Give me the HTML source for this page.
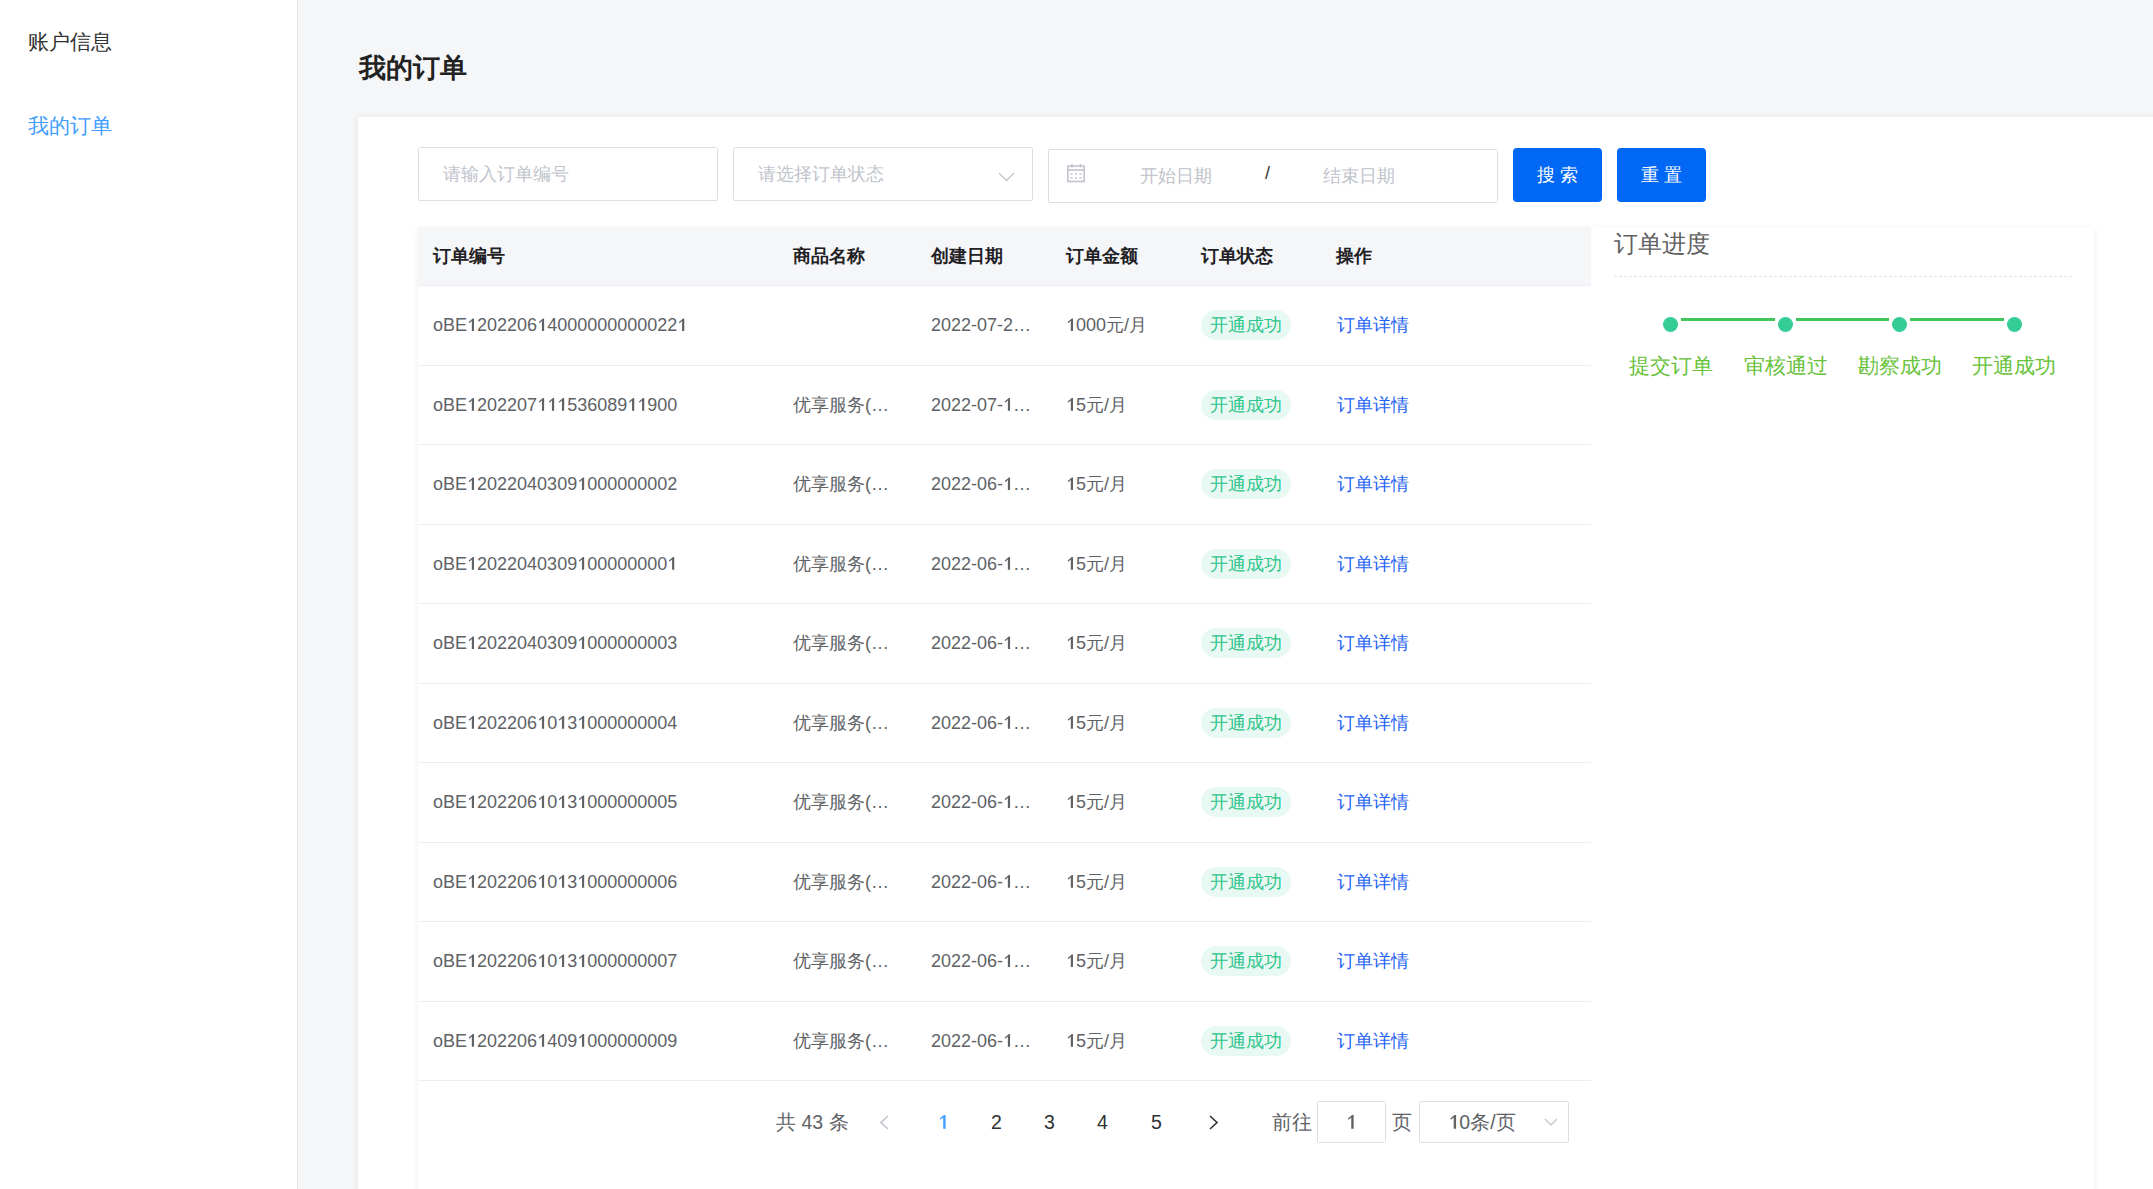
<!DOCTYPE html>
<html><head><meta charset="utf-8">
<style>
*{box-sizing:border-box;margin:0;padding:0}
html,body{width:2153px;height:1189px;overflow:hidden}
body{background:#f5f6f8;font-family:"Liberation Sans",sans-serif;position:relative;color:#606266}
.abs{position:absolute}
.side{left:0;top:0;width:298px;height:1189px;background:#fff;border-right:1px solid #e4e4e4}
.nav{position:absolute;left:28px;font-size:21px;line-height:24px;white-space:nowrap}
.title{left:358.5px;top:50px;font-size:27px;font-weight:bold;color:#222;line-height:36px}
.card{left:358px;top:117px;width:1900px;height:1200px;background:#fff;box-shadow:0 1px 7px rgba(0,0,0,.075)}
.inp{position:absolute;border:1px solid #dcdfe6;border-radius:1.5px;background:#fff;font-size:18px;color:#c0c4cc;line-height:20px;white-space:nowrap}
.ph{position:absolute}
.btn{position:absolute;top:148px;width:89px;height:54px;background:#0068f5;border-radius:4px;color:#fff;font-size:18px;line-height:54px;text-align:center;white-space:pre}
.tbl{left:418px;top:227px;width:1173px;height:1000px;background:#fff;z-index:2;box-shadow:-4px 0 6px -2px rgba(0,0,0,.04),0 -3px 5px -2px rgba(0,0,0,.03)}
.thead{position:absolute;left:0;top:0;width:1173px;height:59px;background:#f5f6f8;border-bottom:1px solid #ebeef5}
.th{position:absolute;top:0;height:58px;line-height:58px;font-size:18px;font-weight:bold;color:#1f2024;white-space:nowrap}
.row{position:absolute;left:0;width:1173px;height:79.5px;border-bottom:1px solid #ebeef5}
.td{position:absolute;top:0;height:79px;line-height:79px;font-size:18px;color:#606266;white-space:nowrap}
.tag{position:absolute;left:783px;top:24px;width:90px;height:30px;border-radius:15px;background:#e8f8f2;color:#2ec68c;font-size:18px;line-height:30px;text-align:center}
.lnk{position:absolute;left:919px;top:0;height:79px;line-height:79px;font-size:18px;color:#1f64f2}
.prog{left:1591px;top:227px;width:503px;height:1000px;background:#fff;box-shadow:4px 0 6px -2px rgba(0,0,0,.05),0 -2px 4px -1px rgba(0,0,0,.025)}
.dot{position:absolute;width:15px;height:15px;border-radius:50%;background:#35cd96}
.pline{position:absolute;height:3px;background:#41c45a}
.plab{position:absolute;font-size:21px;line-height:24px;color:#67c23a;white-space:nowrap}
.pg{position:absolute;font-size:19.5px;line-height:24px;color:#606266;white-space:nowrap}
.d1{position:relative;color:transparent}
.d1::before{content:"";position:absolute;left:0;top:.189em;width:.556em;height:.716em;background:var(--c,#606266);clip-path:polygon(58% 0,70% 0,70% 100%,48% 100%,48% 21%,22% 37%,17% 28%)}
</style></head><body>
<div class="abs side">
  <div class="nav" style="top:29.5px;color:#303133">账户信息</div>
  <div class="nav" style="top:114px;color:#409eff">我的订单</div>
</div>
<div class="abs title">我的订单</div>
<div class="abs card"></div>

<!-- filters -->
<div class="inp" style="left:418px;top:147px;width:300px;height:54px"><span class="ph" style="left:24px;top:16px">请输入订单编号</span></div>
<div class="inp" style="left:733px;top:147px;width:300px;height:54px"><span class="ph" style="left:24px;top:16px">请选择订单状态</span>
  <svg class="ph" style="left:264.3px;top:23.6px" width="17" height="10" viewBox="0 0 17 10"><path d="M1 1 L8.5 8.5 L16 1" fill="none" stroke="#c0c4cc" stroke-width="1.3"/></svg>
</div>
<div class="inp" style="left:1048px;top:149px;width:450px;height:54px">
  <svg class="ph" style="left:18px;top:14px" width="19" height="20" viewBox="0 0 19 20"><g fill="none" stroke="#c0c4cc" stroke-width="1.6"><rect x="0.8" y="2.1" width="16.4" height="15.4"/><line x1="0.8" y1="6" x2="17.2" y2="6"/><line x1="5" y1="0" x2="5" y2="3.5"/><line x1="13.5" y1="0" x2="13.5" y2="3.5"/></g><g fill="#c0c4cc"><rect x="3.5" y="9.2" width="2" height="1.4"/><rect x="8" y="9.2" width="2" height="1.4"/><rect x="12.5" y="9.2" width="2" height="1.4"/><rect x="3.5" y="13.2" width="2" height="1.4"/><rect x="8" y="13.2" width="2" height="1.4"/><rect x="12.5" y="13.2" width="2" height="1.4"/></g></svg>
  <span class="ph" style="left:91px;top:16px">开始日期</span>
  <span class="ph" style="left:216px;top:13px;color:#303133">/</span>
  <span class="ph" style="left:274px;top:16px">结束日期</span>
</div>
<div class="btn" style="left:1513px">搜 索</div>
<div class="btn" style="left:1617px">重 置</div>

<!-- table -->
<div class="abs tbl" id="tbl">
  <div class="thead">
    <div class="th" style="left:15px">订单编号</div>
    <div class="th" style="left:375px">商品名称</div>
    <div class="th" style="left:513px">创建日期</div>
    <div class="th" style="left:648px">订单金额</div>
    <div class="th" style="left:783px">订单状态</div>
    <div class="th" style="left:918px">操作</div>
  </div>
<div class="row" style="top:59.0px"><div class="td" style="left:15px">oBE<span class="d1">1</span>202206<span class="d1">1</span>4000000000022<span class="d1">1</span></div><div class="td" style="left:375px"></div><div class="td" style="left:513px">2022-07-2…</div><div class="td" style="left:648px"><span class="d1">1</span>000元/月</div><div class="tag">开通成功</div><div class="lnk">订单详情</div></div>
<div class="row" style="top:138.5px"><div class="td" style="left:15px">oBE<span class="d1">1</span>202207<span class="d1">1</span><span class="d1">1</span><span class="d1">1</span>536089<span class="d1">1</span><span class="d1">1</span>900</div><div class="td" style="left:375px">优享服务(…</div><div class="td" style="left:513px">2022-07-<span class="d1">1</span>…</div><div class="td" style="left:648px"><span class="d1">1</span>5元/月</div><div class="tag">开通成功</div><div class="lnk">订单详情</div></div>
<div class="row" style="top:218.0px"><div class="td" style="left:15px">oBE<span class="d1">1</span>2022040309<span class="d1">1</span>000000002</div><div class="td" style="left:375px">优享服务(…</div><div class="td" style="left:513px">2022-06-<span class="d1">1</span>…</div><div class="td" style="left:648px"><span class="d1">1</span>5元/月</div><div class="tag">开通成功</div><div class="lnk">订单详情</div></div>
<div class="row" style="top:297.5px"><div class="td" style="left:15px">oBE<span class="d1">1</span>2022040309<span class="d1">1</span>00000000<span class="d1">1</span></div><div class="td" style="left:375px">优享服务(…</div><div class="td" style="left:513px">2022-06-<span class="d1">1</span>…</div><div class="td" style="left:648px"><span class="d1">1</span>5元/月</div><div class="tag">开通成功</div><div class="lnk">订单详情</div></div>
<div class="row" style="top:377.0px"><div class="td" style="left:15px">oBE<span class="d1">1</span>2022040309<span class="d1">1</span>000000003</div><div class="td" style="left:375px">优享服务(…</div><div class="td" style="left:513px">2022-06-<span class="d1">1</span>…</div><div class="td" style="left:648px"><span class="d1">1</span>5元/月</div><div class="tag">开通成功</div><div class="lnk">订单详情</div></div>
<div class="row" style="top:456.5px"><div class="td" style="left:15px">oBE<span class="d1">1</span>202206<span class="d1">1</span>0<span class="d1">1</span>3<span class="d1">1</span>000000004</div><div class="td" style="left:375px">优享服务(…</div><div class="td" style="left:513px">2022-06-<span class="d1">1</span>…</div><div class="td" style="left:648px"><span class="d1">1</span>5元/月</div><div class="tag">开通成功</div><div class="lnk">订单详情</div></div>
<div class="row" style="top:536.0px"><div class="td" style="left:15px">oBE<span class="d1">1</span>202206<span class="d1">1</span>0<span class="d1">1</span>3<span class="d1">1</span>000000005</div><div class="td" style="left:375px">优享服务(…</div><div class="td" style="left:513px">2022-06-<span class="d1">1</span>…</div><div class="td" style="left:648px"><span class="d1">1</span>5元/月</div><div class="tag">开通成功</div><div class="lnk">订单详情</div></div>
<div class="row" style="top:615.5px"><div class="td" style="left:15px">oBE<span class="d1">1</span>202206<span class="d1">1</span>0<span class="d1">1</span>3<span class="d1">1</span>000000006</div><div class="td" style="left:375px">优享服务(…</div><div class="td" style="left:513px">2022-06-<span class="d1">1</span>…</div><div class="td" style="left:648px"><span class="d1">1</span>5元/月</div><div class="tag">开通成功</div><div class="lnk">订单详情</div></div>
<div class="row" style="top:695.0px"><div class="td" style="left:15px">oBE<span class="d1">1</span>202206<span class="d1">1</span>0<span class="d1">1</span>3<span class="d1">1</span>000000007</div><div class="td" style="left:375px">优享服务(…</div><div class="td" style="left:513px">2022-06-<span class="d1">1</span>…</div><div class="td" style="left:648px"><span class="d1">1</span>5元/月</div><div class="tag">开通成功</div><div class="lnk">订单详情</div></div>
<div class="row" style="top:774.5px"><div class="td" style="left:15px">oBE<span class="d1">1</span>202206<span class="d1">1</span>409<span class="d1">1</span>000000009</div><div class="td" style="left:375px">优享服务(…</div><div class="td" style="left:513px">2022-06-<span class="d1">1</span>…</div><div class="td" style="left:648px"><span class="d1">1</span>5元/月</div><div class="tag">开通成功</div><div class="lnk">订单详情</div></div>
</div>

<!-- progress -->
<div class="abs prog">
  <div class="abs" style="left:23px;top:2px;font-size:24px;line-height:30px;color:#5f6062">订单进度</div>
  <div class="abs" style="left:23px;top:49px;width:458px;border-top:1px dashed #e2e2e2"></div>
</div>
<div class="dot" style="left:1663px;top:317px"></div>
<div class="dot" style="left:1778px;top:317px"></div>
<div class="dot" style="left:1892px;top:317px"></div>
<div class="dot" style="left:2007px;top:317px"></div>
<div class="pline" style="left:1681px;top:318px;width:94px"></div>
<div class="pline" style="left:1796px;top:318px;width:93px"></div>
<div class="pline" style="left:1910px;top:318px;width:94px"></div>
<div class="plab" style="left:1629px;top:354px">提交订单</div>
<div class="plab" style="left:1744px;top:354px">审核通过</div>
<div class="plab" style="left:1858px;top:354px">勘察成功</div>
<div class="plab" style="left:1972px;top:354px">开通成功</div>

<!-- pagination -->
<div style="position:absolute;left:0;top:0;z-index:3">
<div class="pg" style="left:776px;top:1110px">共 43 条</div>
<svg class="abs" style="left:879px;top:1115px" width="11" height="15" viewBox="0 0 11 15"><path d="M9 1 L2 7.5 L9 14" fill="none" stroke="#c0c4cc" stroke-width="1.6"/></svg>
<div class="pg" style="left:938px;top:1110px;color:#409eff;--c:#409eff"><span class="d1">1</span></div>
<div class="pg" style="left:991px;top:1110px;color:#303133">2</div>
<div class="pg" style="left:1044px;top:1110px;color:#303133">3</div>
<div class="pg" style="left:1097px;top:1110px;color:#303133">4</div>
<div class="pg" style="left:1151px;top:1110px;color:#303133">5</div>
<svg class="abs" style="left:1208px;top:1115px" width="11" height="15" viewBox="0 0 11 15"><path d="M2 1 L9 7.5 L2 14" fill="none" stroke="#303133" stroke-width="1.6"/></svg>
<div class="pg" style="left:1272px;top:1110px">前往</div>
<div class="inp" style="left:1317px;top:1101px;width:69px;height:42px;color:#606266;font-size:19.5px;text-align:center;line-height:40px"><span class="d1">1</span></div>
<div class="pg" style="left:1392px;top:1110px">页</div>
<div class="inp" style="left:1419px;top:1101px;width:150px;height:42px;color:#606266;font-size:19.5px;line-height:40px"><span class="ph" style="left:28.5px;top:0"><span class="d1">1</span>0条/页</span>
  <svg class="ph" style="left:124px;top:16px" width="14" height="9" viewBox="0 0 14 9"><path d="M1 1 L7 7 L13 1" fill="none" stroke="#c0c4cc" stroke-width="1.3"/></svg>
</div>
</div>
</body></html>
